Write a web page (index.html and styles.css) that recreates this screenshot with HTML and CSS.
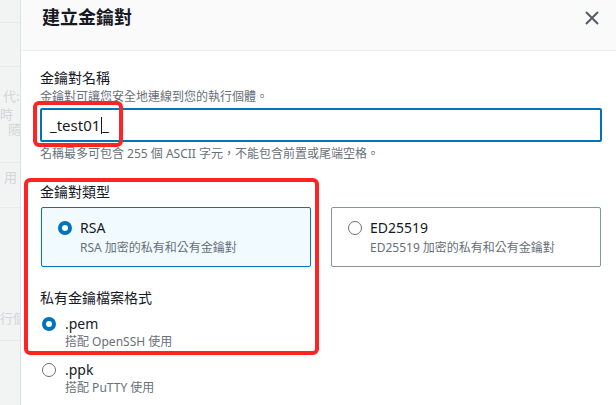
FILE: index.html
```html
<!DOCTYPE html>
<html lang="zh-Hant">
<head>
<meta charset="utf-8">
<link rel="stylesheet" href="styles.css">
</head>
<body>
<div class="page">
  <aside class="backdrop">
    <div class="bd-line l0"></div>
    <div class="bd-line l1"></div>
    <div class="bd-text t1">代:</div>
    <div class="bd-text t2">時</div>
    <div class="bd-text t3">隨</div>
    <div class="bd-line l2"></div>
    <div class="bd-text t4">用</div>
    <div class="bd-line l3"></div>
    <div class="bd-text t5">行個</div>
    <div class="bd-line l4"></div>
  </aside>
  <section class="modal">
    <header class="modal-header">
      <h1 class="modal-title">建立金鑰對</h1>
      <svg class="close" width="16" height="16" viewBox="0 0 16 16"><path d="M2 2 L14 14 M14 2 L2 14" stroke="#545b64" stroke-width="2" fill="none"/></svg>
    </header>
    <div class="modal-body">
      <div class="field">
        <div class="label">金鑰對名稱</div>
        <div class="desc">金鑰對可讓您安全地連線到您的執行個體。</div>
        <div class="input"><span>_test01</span><span class="caret"></span><span>_</span></div>
        <div class="hint">名稱最多可包含 255 個 ASCII 字元，不能包含前置或尾端空格。</div>
      </div>
      <div class="field type-field">
        <div class="label">金鑰對類型</div>
        <div class="tiles">
          <div class="tile selected">
            <span class="radio on"></span>
            <div>
              <div class="opt-title">RSA</div>
              <div class="opt-desc">RSA 加密的私有和公有金鑰對</div>
            </div>
          </div>
          <div class="tile">
            <span class="radio"></span>
            <div>
              <div class="opt-title">ED25519</div>
              <div class="opt-desc">ED25519 加密的私有和公有金鑰對</div>
            </div>
          </div>
        </div>
      </div>
      <div class="field format-field">
        <div class="label">私有金鑰檔案格式</div>
        <div class="option first">
          <span class="radio on"></span>
          <div>
            <div class="opt-title">.pem</div>
            <div class="opt-desc">搭配 OpenSSH 使用</div>
          </div>
        </div>
        <div class="option">
          <span class="radio"></span>
          <div>
            <div class="opt-title">.ppk</div>
            <div class="opt-desc">搭配 PuTTY 使用</div>
          </div>
        </div>
      </div>
    </div>
    <div class="mark mark-input"></div>
    <div class="mark mark-type"></div>
  </section>
</div>
</body>
</html>
```
FILE: styles.css
```css
* { box-sizing: border-box; }
html, body { margin: 0; padding: 0; }
body {
  width: 616px;
  height: 405px;
  overflow: hidden;
  background: #fff;
  font-family: "Noto Sans", "Noto Sans CJK TC", sans-serif;
  color: #16191f;
}
.page { display: flex; height: 405px; }
.backdrop {
  width: 21px;
  flex: none;
  background: #f2f3f3;
  border-right: 1px solid #dfe2e2;
  position: relative;
  overflow: hidden;
}
.bd-line { position: absolute; left: 0; right: 0; height: 1px; background: #e8eaea; }
.l0 { top: 22px; }
.l1 { top: 66px; }
.l2 { top: 162px; }
.l3 { top: 207px; }
.l4 { top: 340px; }
.bd-text {
  position: absolute;
  font-size: 13px;
  line-height: 13px;
  color: #d3d6d8;
  white-space: nowrap;
}
.t1 { top: 90px; left: 3px; }
.t2 { top: 108px; left: 0; }
.t3 { top: 123px; left: 8px; }
.t4 { top: 171px; left: 4px; }
.t5 { top: 312px; left: 0; }

.modal { flex: 1; position: relative; }
.modal-header {
  height: 51px;
  background: #fafafa;
  border-bottom: 1px solid #e9ebed;
  display: flex;
  align-items: flex-start;
  justify-content: space-between;
  padding: 5px 16px 0 21px;
}
.modal-title {
  margin: 0;
  font-size: 18px;
  line-height: 25px;
  font-weight: 700;
  color: #16191f;
}
.close { margin-top: 5px; }
.modal-body { padding: 17px 14px 0 19px; }
.label { font-size: 14px; line-height: 20px; color: #16191f; }
.desc, .hint, .opt-desc { font-size: 12px; line-height: 16px; color: #687078; }
.desc { margin-top: 1px; }
.input {
  margin-top: 3px;
  height: 34px;
  border: 2px solid #0073bb;
  border-radius: 2px;
  display: flex;
  align-items: center;
  padding-left: 8px;
  font-size: 15px;
  color: #16191f;
}
.caret { width: 1px; height: 17px; background: #16191f; margin: 0 0 0 1px; }
.hint { margin-top: 4px; }
.type-field { margin-top: 20px; }
.tiles {
  margin-top: 5px;
  display: grid;
  grid-template-columns: 270px 270px;
  column-gap: 20px;
  padding-left: 1px;
}
.tile {
  height: 60px;
  border: 1px solid #879596;
  border-radius: 2px;
  display: flex;
  align-items: flex-start;
  gap: 8px;
  padding: 10px 0 0 16px;
}
.tile.selected { background: #f1faff; border-color: #0073bb; }
.opt-title { font-size: 14px; line-height: 20px; color: #16191f; }
.tile .opt-desc { margin-top: 2px; }
.radio {
  flex: none;
  width: 14px;
  height: 14px;
  margin-top: 3px;
  border-radius: 50%;
  border: 1.5px solid #687078;
  background: #fff;
}
.radio.on { border: 4px solid #0073bb; }
.format-field { margin-top: 21px; }
.option { display: flex; gap: 9px; padding-left: 2px; margin-top: 10px; }
.option.first { margin-top: 6px; }

.mark {
  position: absolute;
  border: 4px solid #ff2424;
  border-radius: 6px;
  pointer-events: none;
}
.mark-input { left: 12px; top: 101px; width: 90px; height: 46px; }
.mark-type { left: 3px; top: 178px; width: 295px; height: 177px; }
```
